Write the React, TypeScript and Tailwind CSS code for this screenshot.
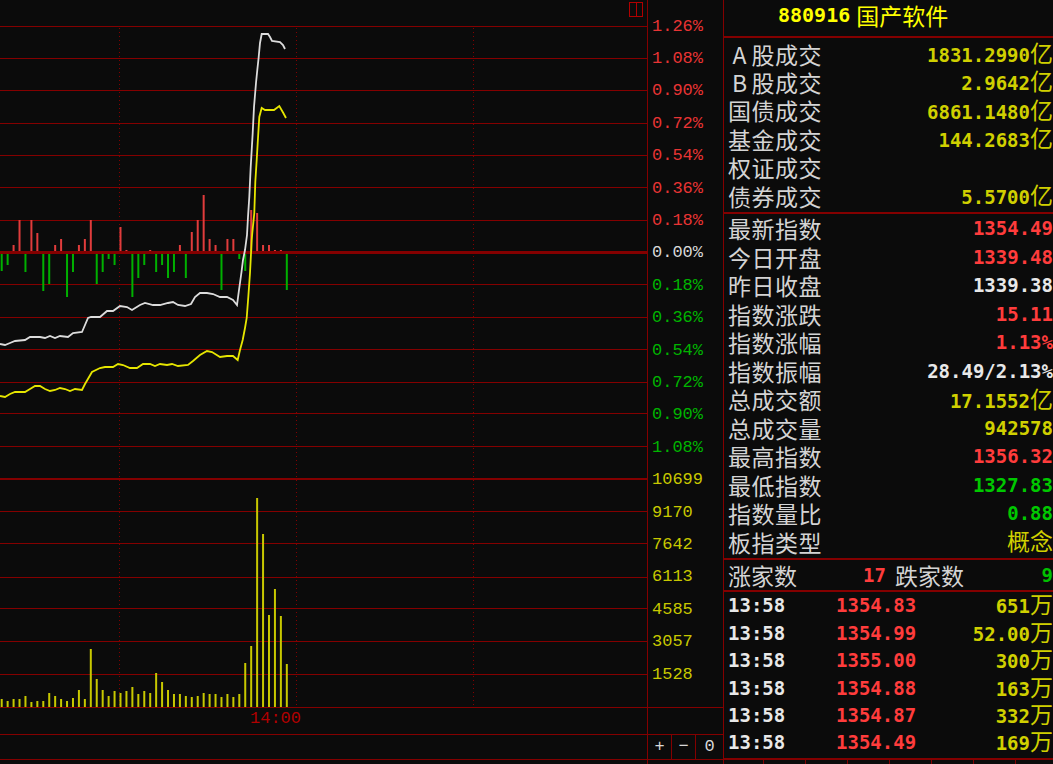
const GRID = "#840000";

const white: [number, number][] = [
  [0, 344], [5, 345], [10, 343], [15, 341], [25, 340], [30, 337], [40, 337], [45, 338], [50, 336], [55, 338],
  [60, 336], [68, 337], [73, 333], [82, 332], [88, 318], [91, 317], [100, 317], [107, 311], [113, 311], [120, 306],
  [127, 307], [132, 310], [140, 305], [145, 303], [153, 305], [160, 305], [168, 303], [173, 302], [178, 305], [185, 306],
  [191, 304], [195, 297], [200, 293], [207, 293], [213, 294], [220, 297], [227, 297], [233, 300], [237, 305], [239, 290],
  [241.5, 272], [243, 260], [245, 250], [247, 235], [248, 217], [249.3, 197], [250.7, 167], [252.7, 133], [254, 107],
  [256, 83], [257.3, 70], [258.7, 57], [260, 43], [261.7, 34], [268, 34], [270, 37], [272, 41], [280, 42], [283, 45], [285, 49],
];

const yellow: [number, number][] = [
  [0, 396], [5, 397], [10, 394], [15, 392], [25, 392], [30, 389], [35, 386], [40, 386], [45, 389], [50, 391],
  [55, 390], [60, 388], [65, 389], [70, 391], [75, 389], [82, 390], [85, 384], [92, 372], [100, 368], [105, 367],
  [113, 367], [118, 364], [123, 365], [130, 368], [137, 368], [143, 364], [150, 364], [155, 366], [160, 364], [167, 365],
  [172, 364], [178, 366], [188, 365], [193, 361], [200, 355], [207, 351], [212, 352], [220, 357], [227, 356], [233, 356],
  [237.7, 360], [240, 350], [242.7, 340], [245, 328], [246.7, 318], [248.3, 297], [250, 273], [251.7, 240], [252.3, 233],
  [254.3, 213], [255.3, 182], [256.7, 160], [257.7, 143], [259.3, 117], [261.7, 108], [265, 110], [274, 110],
  [279.3, 106], [283.3, 113], [286, 118],
];

// volume bar tops, baseline 707
const vol = [
  699, 701, 699, 699, 696, 702, 701, 701, 693, 696, 699, 701, 698, 690, 699, 649, 679, 690, 696, 691,
  693, 691, 687, 694, 691, 693, 673, 682, 690, 694, 694, 696, 697, 696, 693, 694, 694, 697, 694, 697,
  694, 663, 646, 498, 534, 615, 589, 616, 664,
];

const up: Record<number, number> = {
  2: 245, 3: 220, 5: 220, 6: 233, 9: 245, 10: 239, 13: 245, 14: 239, 15: 220, 20: 227, 21: 250, 25: 250, 30: 245,
  32: 232, 33: 220, 34: 195, 35: 239, 36: 245, 38: 239, 39: 239, 42: 210, 43: 213, 44: 245, 45: 245, 46: 250, 47: 250,
};
const down: Record<number, number> = {
  0: 271, 1: 265, 4: 272, 7: 291, 8: 284, 11: 297, 12: 272, 16: 284, 17: 272, 18: 259, 19: 265, 22: 297, 23: 278,
  24: 265, 26: 272, 27: 265, 28: 278, 29: 272, 31: 278, 37: 290, 40: 259, 41: 271, 48: 290,
};

const gridY = [26, 58, 90, 123, 155, 187, 220, 284, 317, 349, 382, 413, 446, 511, 543, 577, 608, 641, 674, 707, 734, 759];

const bx = (k: number) => 0.7 + k * 5.94;
const pts = (p: [number, number][]) => p.map(([x, y]) => `${x},${y}`).join(" ");

function Chart() {
  return (
    <div className="relative h-full w-[647px] shrink-0">
      <svg width={647} height={764} className="block">
        {gridY.map((y) => (
          <rect key={y} x={0} y={y} width={647} height={1} fill={GRID} />
        ))}
        <rect x={0} y={251} width={647} height={3} fill={GRID} />
        <rect x={0} y={478} width={647} height={2} fill={GRID} />
        {[119, 296, 473].map((x) => (
          <line key={x} x1={x + 0.5} x2={x + 0.5} y1={28} y2={707} stroke={GRID} strokeWidth={1} strokeDasharray="1 3" />
        ))}
        <rect x={629.5} y={2.5} width={13} height={14} fill="none" stroke="#b00000" />
        <line x1={636.5} x2={636.5} y1={3} y2={16} stroke="#b00000" />

        {vol.map((t, k) => (
          <rect key={"v" + k} x={bx(k)} y={t} width={2} height={707 - t} fill="#c8c800" />
        ))}
        {Object.entries(up).map(([k, t]) => (
          <rect key={"u" + k} x={bx(+k)} y={t} width={2} height={251 - t} fill="#e03c3c" />
        ))}
        {Object.entries(down).map(([k, b]) => (
          <rect key={"d" + k} x={bx(+k)} y={254} width={2} height={b - 254} fill="#00b000" />
        ))}

        <polyline points={pts(yellow)} fill="none" stroke="#e6e600" strokeWidth={1.8} />
        <polyline points={pts(white)} fill="none" stroke="#dcdcdc" strokeWidth={1.8} />
      </svg>
      <span className="absolute left-[250px] top-[710px] font-['Liberation_Mono',monospace] text-[17px] leading-none text-[#b00000]">
        14:00
      </span>
    </div>
  );
}

const axis: [string, string][] = [
  ["1.26%", "text-[#e83434]"],
  ["1.08%", "text-[#e83434]"],
  ["0.90%", "text-[#e83434]"],
  ["0.72%", "text-[#e83434]"],
  ["0.54%", "text-[#e83434]"],
  ["0.36%", "text-[#e83434]"],
  ["0.18%", "text-[#e83434]"],
  ["0.00%", "text-[#d8d8d8]"],
  ["0.18%", "text-[#00b400]"],
  ["0.36%", "text-[#00b400]"],
  ["0.54%", "text-[#00b400]"],
  ["0.72%", "text-[#00b400]"],
  ["0.90%", "text-[#00b400]"],
  ["1.08%", "text-[#00b400]"],
  ["10699", "text-[#c8c800]"],
  ["9170", "text-[#c8c800]"],
  ["7642", "text-[#c8c800]"],
  ["6113", "text-[#c8c800]"],
  ["4585", "text-[#c8c800]"],
  ["3057", "text-[#c8c800]"],
  ["1528", "text-[#c8c800]"],
];

function Axis() {
  return (
    <div className="flex h-full w-[76px] shrink-0 flex-col border-l border-[#840000] font-['Liberation_Mono',monospace] text-[17px]">
      <div className="h-[707px] pl-[4px] pt-[10px]">
        {axis.map(([t, c], i) => (
          <div key={i} className={`flex h-[32.4px] items-center leading-none ${c}`}>
            {t}
          </div>
        ))}
      </div>
      <div className="h-[27px] border-t border-[#840000]" />
      <div className="flex h-[26px] border-y border-[#840000] text-[#d8d8d8]">
        <div className="flex w-[24px] items-center justify-center border-r border-[#840000]">+</div>
        <div className="flex w-[24px] items-center justify-center border-r border-[#840000]">−</div>
        <div className="flex flex-1 items-center justify-center">0</div>
      </div>
    </div>
  );
}

const cjk = "font-['Noto_Sans_CJK_SC',sans-serif]";
const mono = "font-['DejaVu_Sans_Mono',monospace] font-bold text-[19px]";

type Row = { label: React.ReactNode; value?: string; unit?: string; color?: string };

const trade: Row[] = [
  { label: <><span className="inline-block w-[23.5px] text-center">A</span>股成交</>, value: "1831.2990", unit: "亿" },
  { label: <><span className="inline-block w-[23.5px] text-center">B</span>股成交</>, value: "2.9642", unit: "亿" },
  { label: "国债成交", value: "6861.1480", unit: "亿" },
  { label: "基金成交", value: "144.2683", unit: "亿" },
  { label: "权证成交" },
  { label: "债券成交", value: "5.5700", unit: "亿" },
];

const stats: Row[] = [
  { label: "最新指数", value: "1354.49", color: "text-[#ff3c3c]" },
  { label: "今日开盘", value: "1339.48", color: "text-[#ff3c3c]" },
  { label: "昨日收盘", value: "1339.38", color: "text-[#e8e8e8]" },
  { label: "指数涨跌", value: "15.11", color: "text-[#ff3c3c]" },
  { label: "指数涨幅", value: "1.13%", color: "text-[#ff3c3c]" },
  { label: "指数振幅", value: "28.49/2.13%", color: "text-[#e8e8e8]" },
  { label: "总成交额", value: "17.1552", unit: "亿" },
  { label: "总成交量", value: "942578" },
  { label: "最高指数", value: "1356.32", color: "text-[#ff3c3c]" },
  { label: "最低指数", value: "1327.83", color: "text-[#00c800]" },
  { label: "指数量比", value: "0.88", color: "text-[#00c800]" },
  { label: "板指类型", unit: "概念" },
];

const ticks: [string, string, string][] = [
  ["1354.83", "651", "万"],
  ["1354.99", "52.00", "万"],
  ["1355.00", "300", "万"],
  ["1354.88", "163", "万"],
  ["1354.87", "332", "万"],
  ["1354.49", "169", "万"],
];

function Value({ value, unit, color }: { value?: string; unit?: string; color: string }) {
  return (
    <span className={`${mono} whitespace-nowrap leading-[24px] ${color}`}>
      {value}
      {unit && <span className={`${cjk} text-[23px] font-normal`}>{unit}</span>}
    </span>
  );
}

function InfoRow({ row, h }: { row: Row; h: string }) {
  return (
    <div className={`flex ${h} items-center justify-between pl-[4px]`}>
      <span className={`${cjk} text-[23px] leading-[24px] tracking-[0.5px] text-[#d4d4d4]`}>{row.label}</span>
      <Value value={row.value} unit={row.unit} color={row.color ?? "text-[#d0d000]"} />
    </div>
  );
}

function Panel() {
  return (
    <div className="flex h-full w-[330px] shrink-0 flex-col border-l border-[#840000]">
      <div className="flex h-[39px] items-start whitespace-nowrap border-b-2 border-[#840000] pl-[54px] pt-[2px] text-[#ffff00]">
        <span className="font-['DejaVu_Sans_Mono',monospace] text-[20px] font-bold leading-[26px]">880916</span>
        <span className={`${cjk} ml-[6px] text-[23px] leading-[26px]`}>国产软件</span>
      </div>
      <div className="border-b-2 border-[#840000] pb-[2px] pt-[1px]">
        {trade.map((r, i) => (
          <InfoRow key={i} row={r} h="h-[28.4px]" />
        ))}
      </div>
      <div className="border-b-2 border-[#840000] pb-[2px]">
        {stats.map((r, i) => (
          <InfoRow key={i} row={r} h="h-[28.55px]" />
        ))}
      </div>
      <div className={`flex h-[32px] items-center border-b-2 border-[#840000] ${cjk} text-[23px] leading-[24px]`}>
        <div className="flex w-[165px] items-center justify-between pl-[4px] pr-[3px]">
          <span className="text-[#d4d4d4]">涨家数</span>
          <span className={`${mono} text-[#ff3c3c]`}>17</span>
        </div>
        <div className="flex flex-1 items-center justify-between pl-[6px]">
          <span className="text-[#d4d4d4]">跌家数</span>
          <span className={`${mono} text-[#00c000]`}>9</span>
        </div>
      </div>
      <div className="border-b-2 border-[#840000] pb-[2px]">
        {ticks.map(([p, v, u], i) => (
          <div key={i} className="flex h-[27.4px] items-center pl-[4px]">
            <span className={`${mono} w-[108px] leading-[22px] text-[#e8e8e8]`}>13:58</span>
            <span className={`${mono} leading-[22px] text-[#ff3c3c]`}>{p}</span>
            <span className="ml-auto">
              <Value value={v} unit={u} color="text-[#d0d000]" />
            </span>
          </div>
        ))}
      </div>
      <div className="flex h-[4px] gap-[41px] pl-[39px]">
        {Array.from({ length: 7 }).map((_, i) => (
          <div key={i} className="h-full w-px bg-[#840000]" />
        ))}
      </div>
    </div>
  );
}

export default function App() {
  return (
    <div className="flex h-[764px] w-[1053px] overflow-hidden bg-[#0b0b0b]">
      <Chart />
      <Axis />
      <Panel />
    </div>
  );
}
